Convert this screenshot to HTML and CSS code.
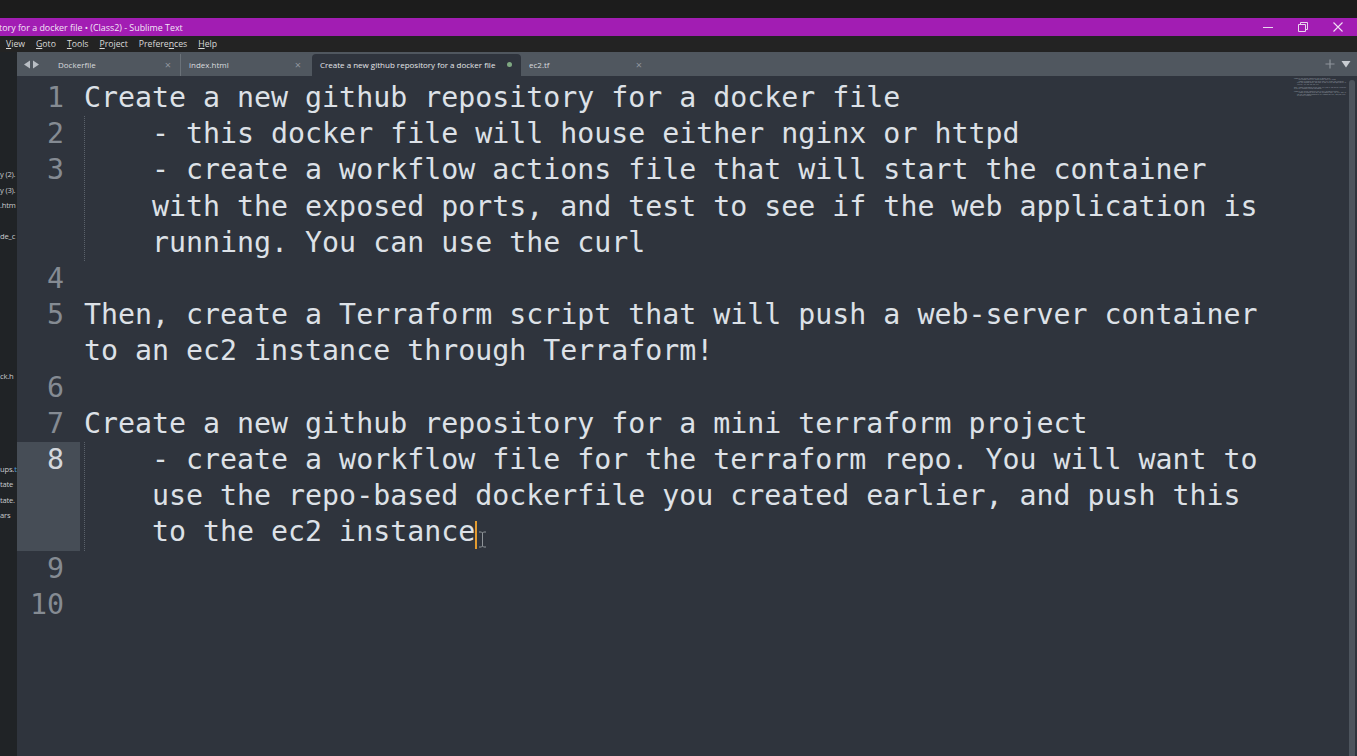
FILE: index.html
```html
<!DOCTYPE html>
<html lang="en">
<head>
<meta charset="utf-8">
<title>Sublime Text</title>
<link rel="stylesheet" href="styles.css">
</head>
<body>
<div class="screen">
  <div class="topbar"></div>
  <div class="titlebar">
    <div class="title">tory for a docker file • (Class2) - Sublime Text</div>
    <div class="winctrls">
      <svg class="wc" width="12" height="12" viewBox="0 0 12 12"><path d="M1 6.5h10" stroke="#e9d6ee" stroke-width="1"/></svg>
      <svg class="wc" width="12" height="12" viewBox="0 0 12 12"><path d="M1.5 3.5h7v7h-7z M3.5 3.5v-2h7v7h-2" fill="none" stroke="#e9d6ee" stroke-width="1"/></svg>
      <svg class="wc" width="12" height="12" viewBox="0 0 12 12"><path d="M1.5 1.5l9 9M10.5 1.5l-9 9" stroke="#f0e0f4" stroke-width="1.1"/></svg>
    </div>
  </div>
  <div class="menubar">
    <span class="menu"><u>V</u>iew</span>
    <span class="menu"><u>G</u>oto</span>
    <span class="menu"><u>T</u>ools</span>
    <span class="menu"><u>P</u>roject</span>
    <span class="menu">Prefere<u>n</u>ces</span>
    <span class="menu"><u>H</u>elp</span>
  </div>
  <div class="main">
    <aside class="sidebar">
      <div class="sb-item">y (2).</div>
      <div class="sb-item">y (3).</div>
      <div class="sb-item">.htm</div>
      <div class="sb-item empty"></div>
      <div class="sb-item">de_c</div>
      <div class="sb-item empty"></div>
      <div class="sb-item empty"></div>
      <div class="sb-item empty"></div>
      <div class="sb-item empty"></div>
      <div class="sb-item empty"></div>
      <div class="sb-item empty"></div>
      <div class="sb-item empty"></div>
      <div class="sb-item empty"></div>
      <div class="sb-item">ck.h</div>
      <div class="sb-item empty"></div>
      <div class="sb-item empty"></div>
      <div class="sb-item empty"></div>
      <div class="sb-item empty"></div>
      <div class="sb-item empty"></div>
      <div class="sb-item">ups.<span class="sb-blue">t</span></div>
      <div class="sb-item">tate</div>
      <div class="sb-item">tate.</div>
      <div class="sb-item">ars</div>
    </aside>
    <section class="pane">
      <div class="tabbar">
        <div class="tabnav">
          <svg width="8" height="9" viewBox="0 0 8 9"><path d="M7 0.5v8L1 4.5z" fill="#b9bec4"/></svg>
          <svg width="8" height="9" viewBox="0 0 8 9"><path d="M1 0.5v8L7 4.5z" fill="#b9bec4"/></svg>
        </div>
        <div class="tab"><span class="tab-label">Dockerfile</span><span class="tab-close">×</span></div>
        <div class="tab tab-sep"><span class="tab-label">index.html</span><span class="tab-close">×</span></div>
        <div class="tab active"><span class="tab-label">Create a new github repository for a docker file</span><span class="dot"></span></div>
        <div class="tab"><span class="tab-label">ec2.tf</span><span class="tab-close">×</span></div>
        <div class="tabbar-right">
          <svg width="10" height="10" viewBox="0 0 10 10"><path d="M5 0.5v9M0.5 5h9" stroke="#8e949b" stroke-width="1.2"/></svg>
          <svg width="10" height="8" viewBox="0 0 10 8"><path d="M0.5 1h9L5 7.5z" fill="#c9cdd2"/></svg>
        </div>
      </div>
      <div class="editor">
        <div class="code">
          <div class="line"><div class="num">1</div><div class="text"><div class="row">Create a new github repository for a docker file</div></div></div>
          <div class="line"><div class="num">2</div><div class="text guide"><div class="row">    - this docker file will house either nginx or httpd</div></div></div>
          <div class="line"><div class="num">3</div><div class="text guide"><div class="row">    - create a workflow actions file that will start the container</div><div class="row cont">with the exposed ports, and test to see if the web application is</div><div class="row cont">running. You can use the curl</div></div></div>
          <div class="line"><div class="num">4</div><div class="text"><div class="row"></div></div></div>
          <div class="line"><div class="num">5</div><div class="text"><div class="row">Then, create a Terraform script that will push a web-server container</div><div class="row">to an ec2 instance through Terraform!</div></div></div>
          <div class="line"><div class="num">6</div><div class="text"><div class="row"></div></div></div>
          <div class="line"><div class="num">7</div><div class="text"><div class="row">Create a new github repository for a mini terraform project</div></div></div>
          <div class="line current"><div class="num">8</div><div class="text guide"><div class="row">    - create a workflow file for the terraform repo. You will want to</div><div class="row cont">use the repo-based dockerfile you created earlier, and push this</div><div class="row cont">to the ec2 instance<span class="caret"></span></div></div></div>
          <div class="line"><div class="num">9</div><div class="text"><div class="row"></div></div></div>
          <div class="line"><div class="num">10</div><div class="text"><div class="row"></div></div></div>
          <svg class="ibeam" width="9" height="17" viewBox="0 0 9 17"><path d="M1 1h2.5l1 1 1-1H8M4.5 2v13M1 16h2.5l1-1 1 1H8" fill="none" stroke="#8f9499" stroke-width="1"/></svg>
        </div>
        <div class="minimap">
          <div class="mm-row">Create a new github repository for a docker file</div>
          <div class="mm-row">    - this docker file will house either nginx or httpd</div>
          <div class="mm-row">    - create a workflow actions file that will start the container</div>
          <div class="mm-row">    with the exposed ports, and test to see if the web application is</div>
          <div class="mm-row">    running. You can use the curl</div>
          <div class="mm-row"></div>
          <div class="mm-row">Then, create a Terraform script that will push a web-server container</div>
          <div class="mm-row">to an ec2 instance through Terraform!</div>
          <div class="mm-row"></div>
          <div class="mm-row">Create a new github repository for a mini terraform project</div>
          <div class="mm-row">    - create a workflow file for the terraform repo. You will want to</div>
          <div class="mm-row">    use the repo-based dockerfile you created earlier, and push this</div>
          <div class="mm-row">    to the ec2 instance</div>
        </div>
        <div class="scrollbar"><div class="thumb"></div></div>
      </div>
    </section>
  </div>
</div>
</body>
</html>
```
FILE: styles.css
```css
* { box-sizing: border-box; }
html, body { margin: 0; padding: 0; }
body {
  width: 1357px;
  height: 756px;
  overflow: hidden;
  background: #1c1c1c;
  font-family: "Open Sans", "Noto Sans", sans-serif;
}
.screen {
  width: 1357px;
  height: 756px;
  display: flex;
  flex-direction: column;
}
.topbar { height: 18px; background: #1c1c1c; flex: none; }
.titlebar {
  height: 18px;
  flex: none;
  background: #a21db3;
  display: flex;
  align-items: center;
  justify-content: space-between;
  color: #f3e6f6;
}
.title {
  font-size: 8.9px;
  white-space: nowrap;
  margin-left: -1px;
}
.winctrls {
  display: flex;
  align-items: center;
  gap: 23px;
  padding-right: 13px;
}
.wc { display: block; }
.menubar {
  height: 16px;
  flex: none;
  background: #232323;
  display: flex;
  align-items: center;
  gap: 11px;
  padding-left: 6px;
  color: #d9d9d9;
  font-size: 8.7px;
}
.menu u { text-decoration: underline; text-underline-offset: 1px; }
.main {
  flex: 1;
  display: flex;
  min-height: 0;
}
.sidebar {
  width: 17px;
  flex: none;
  background: #202326;
  padding-top: 115px;
  color: #c9cbce;
  font-size: 7.6px;
  letter-spacing: -0.2px;
}
.sb-item {
  height: 15.5px;
  line-height: 15.5px;
  white-space: nowrap;
}
.sb-blue { color: #4aa3e0; }
.pane {
  flex: 1;
  display: flex;
  flex-direction: column;
  min-width: 0;
}
.tabbar {
  height: 24px;
  flex: none;
  background: #50575f;
  display: flex;
  align-items: flex-end;
  font-size: 8px;
  color: #d8dbde;
}
.tabnav {
  width: 33px;
  height: 24px;
  display: flex;
  align-items: center;
  gap: 1px;
  padding-left: 6px;
}
.tabnav svg { display: block; }
.tab {
  width: 130px;
  height: 22px;
  display: flex;
  align-items: center;
  justify-content: space-between;
  padding: 0 9px 1px 8px;
  white-space: nowrap;
}
.tab-sep { border-left: 1px solid #6a7178; }
.tab-close { color: #8f959c; font-size: 11px; line-height: 1; }
.tab.active {
  width: 209px;
  margin-left: 2px;
  background: #2f343d;
  border-radius: 4px 4px 0 0;
  color: #e4e6e9;
}
.dot {
  width: 5px;
  height: 5px;
  border-radius: 50%;
  background: #7fa882;
}
.tabbar-right {
  margin-left: auto;
  height: 24px;
  display: flex;
  align-items: center;
  gap: 6px;
  padding: 0 6px 1px 0;
}
.tabbar-right svg { display: block; }
.editor {
  flex: 1;
  display: flex;
  background: #2f343d;
  min-height: 0;
}
.code {
  flex: 1;
  position: relative;
  padding-top: 4px;
  font-family: "DejaVu Sans Mono", "Liberation Mono", monospace;
  font-size: 28.25px;
  line-height: 36.2px;
  color: #dde1e7;
}
.line { display: flex; }
.num {
  width: 63px;
  flex: none;
  text-align: right;
  padding-right: 16px;
  color: #858b93;
}
.line.current .num {
  background: #464d56;
  color: #d3d7dc;
}
.text {
  flex: 1;
  padding-left: 4px;
}
.text.guide {
  background-image: linear-gradient(#5b626b 50%, transparent 50%);
  background-size: 1px 2px;
  background-repeat: repeat-y;
  background-position: 4px 0;
}
.row {
  height: 36.2px;
  white-space: pre;
}
.row.cont { padding-left: 4ch; }
.caret {
  display: inline-block;
  width: 2px;
  height: 28px;
  background: #e39b2f;
  vertical-align: -8px;
}
.ibeam {
  position: absolute;
  left: 461px;
  top: 455px;
}
.minimap {
  width: 58px;
  flex: none;
  padding: 2px 0 0 4px;
  overflow: hidden;
  font-family: "DejaVu Sans Mono", monospace;
  font-size: 1.25px;
  line-height: 1.45px;
  color: #b4bac2;
}
.mm-row { height: 1.45px; white-space: pre; }
.scrollbar {
  width: 9px;
  flex: none;
  padding: 4px 2px 0 1px;
}
.thumb {
  height: 100%;
  background: #4d545d;
  border-radius: 3px 3px 0 0;
}
```
